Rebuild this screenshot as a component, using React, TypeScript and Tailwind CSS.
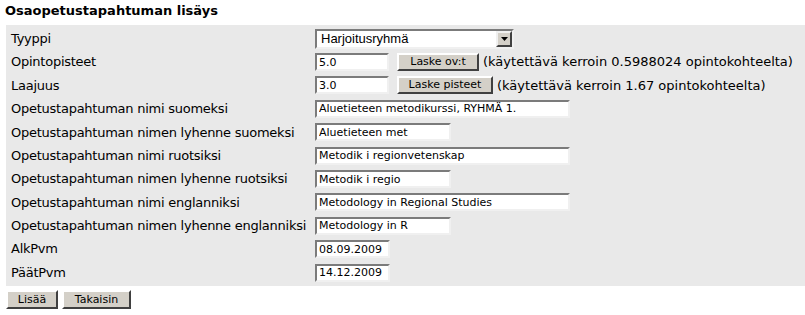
const inputCls =
  'h-[18px] bg-white border-2 border-t-[#7b7b7b] border-l-[#7b7b7b] border-b-[#f0f0f0] border-r-[#f0f0f0] px-[2px] text-[11px] leading-[14px] text-black outline-none [font-family:"DejaVu_Sans",Verdana,sans-serif]';

const btnCls =
  'h-[18px] whitespace-nowrap bg-[#d4d0c8] border-2 border-t-white border-l-white border-b-[#404040] border-r-[#404040] px-0 text-[11px] leading-[14px] text-black [font-family:"DejaVu_Sans",Verdana,sans-serif]';

interface FieldRow {
  label: string;
  value: string;
  width: string;
}

const textRows: FieldRow[] = [
  { label: 'Opetustapahtuman nimi suomeksi', value: 'Aluetieteen metodikurssi, RYHMÄ 1.', width: 'w-[255px]' },
  { label: 'Opetustapahtuman nimen lyhenne suomeksi', value: 'Aluetieteen met', width: 'w-[136px]' },
  { label: 'Opetustapahtuman nimi ruotsiksi', value: 'Metodik i regionvetenskap', width: 'w-[255px]' },
  { label: 'Opetustapahtuman nimen lyhenne ruotsiksi', value: 'Metodik i regio', width: 'w-[136px]' },
  { label: 'Opetustapahtuman nimi englanniksi', value: 'Metodology in Regional Studies', width: 'w-[255px]' },
  { label: 'Opetustapahtuman nimen lyhenne englanniksi', value: 'Metodology in R', width: 'w-[136px]' },
  { label: 'AlkPvm', value: '08.09.2009', width: 'w-[75px]' },
  { label: 'PäätPvm', value: '14.12.2009', width: 'w-[75px]' },
];

function Row({ label, children }: { label: string; children: React.ReactNode }) {
  return (
    <div className="flex h-[23.4px] items-center">
      <div className="w-[309px] shrink-0 whitespace-nowrap pl-[5px] tracking-[-0.25px]">{label}</div>
      <div className="flex items-center whitespace-nowrap">{children}</div>
    </div>
  );
}

export default function App() {
  return (
    <div className="h-[315px] w-[805px] overflow-hidden bg-white text-[13px] text-black [font-family:'DejaVu_Sans',Verdana,sans-serif]">
      <div className="h-[25px] pl-[5px] pt-[2px] text-[13px] font-bold leading-[17px]">Osaopetustapahtuman lisäys</div>
      <div className="ml-[6px] bg-[#e9e9e9] py-[2px]">
        <Row label="Tyyppi">
          <div className="flex h-[20px] w-[199px] items-center border-2 border-t-[#7b7b7b] border-l-[#7b7b7b] border-b-[#f0f0f0] border-r-[#f0f0f0] bg-white">
            <span className="flex-1 pl-[4px] text-[13px] leading-[16px] [font-family:'Liberation_Sans',Arial,sans-serif]">
              Harjoitusryhmä
            </span>
            <span className="flex h-[16px] w-[16px] items-center justify-center border-2 border-t-[#f0f0f0] border-l-[#f0f0f0] border-b-[#404040] border-r-[#404040] bg-[#d4d0c8]">
              <svg width="7" height="4" viewBox="0 0 7 4">
                <path d="M0 0h7L3.5 4z" fill="#000" />
              </svg>
            </span>
          </div>
        </Row>
        <Row label="Opintopisteet">
          <input className={`${inputCls} w-[74px]`} defaultValue="5.0" />
          <button className={`${btnCls} ml-[8px] w-[82px]`}>Laske ov:t</button>
          <span className="ml-[4px]">(käytettävä kerroin 0.5988024 opintokohteelta)</span>
        </Row>
        <Row label="Laajuus">
          <input className={`${inputCls} w-[74px]`} defaultValue="3.0" />
          <button className={`${btnCls} ml-[8px] w-[96px]`}>Laske pisteet</button>
          <span className="ml-[4px]">(käytettävä kerroin 1.67 opintokohteelta)</span>
        </Row>
        {textRows.map((row) => (
          <Row key={row.label} label={row.label}>
            <input className={`${inputCls} ${row.width}`} defaultValue={row.value} />
          </Row>
        ))}
      </div>
      <div className="mt-[4px] flex gap-[4px] pl-[6px]">
        <button className={`${btnCls} h-[19px] w-[52px]`}>Lisää</button>
        <button className={`${btnCls} h-[19px] w-[69px]`}>Takaisin</button>
      </div>
    </div>
  );
}
